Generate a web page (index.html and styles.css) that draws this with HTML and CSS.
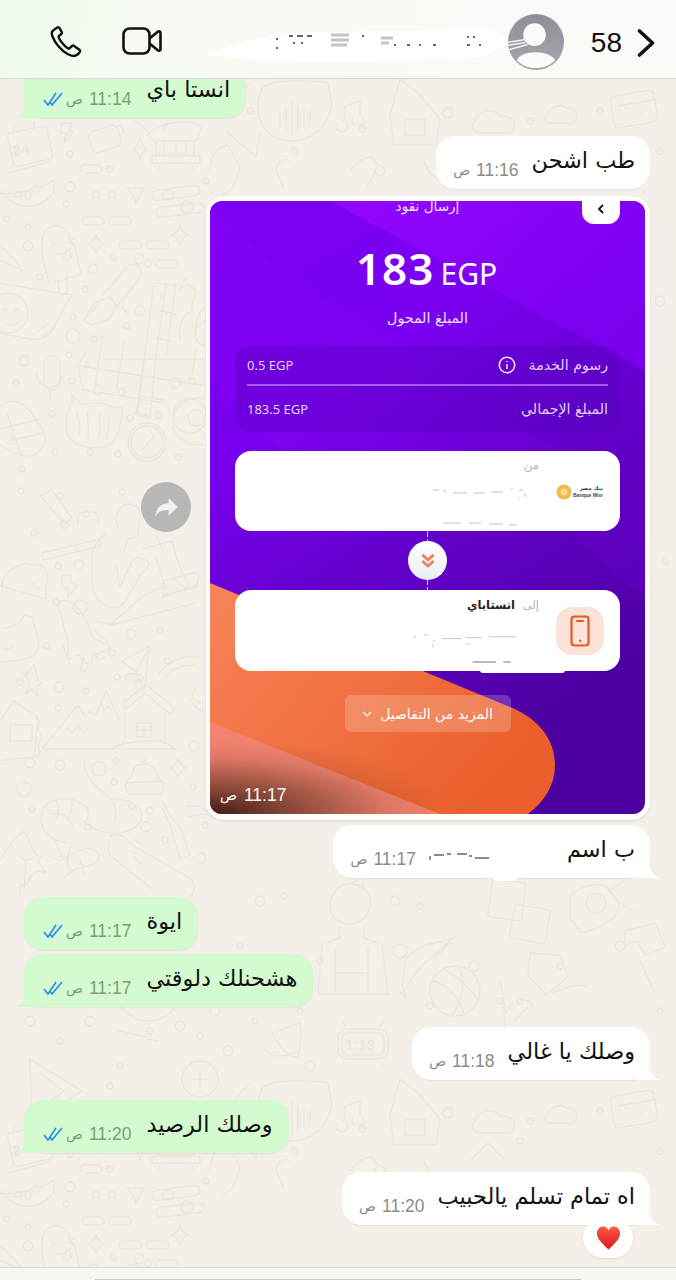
FILE: index.html
```html
<!DOCTYPE html>
<html lang="ar">
<head>
<meta charset="utf-8">
<title>Chat</title>
<link rel="stylesheet" href="styles.css">
</head>
<body>
<div class="phone">
  <header class="topbar">
    <div class="call-actions">
      <svg class="icon-phone" viewBox="0 0 32 32"><path d="M7.2 1.6 3.4 4.2C1.6 5.500 1.500 8 2.400 10.300 4.700 16.400 10.500 24.300 18 28.300c2.700 1.400 5.500 2.200 7.500 1.300 2.100-1 3.900-2.700 4.400-3.900.3-.8.1-1.500-.5-2l-5.300-3.800c-.7-.5-1.500-.4-2.100.1l-2.400 2.200c-.5.4-1.100.5-1.700.2-3.400-1.900-7.600-7.300-9.200-11-.2-.6-.1-1.200.4-1.600l2.200-1.800c.6-.5.8-1.300.4-2L9.600 2.200c-.5-.9-1.500-1.200-2.400-.6Z"/></svg>
      <svg class="icon-video" viewBox="0 0 40 28"><rect x="1.500" y="1.500" width="26" height="25" rx="6"/><path d="M27.500 11.500 35.800 4.800c1.100-.9 2.700-.2 2.700 1.300v15.800c0 1.500-1.600 2.200-2.700 1.300l-8.300-6.700"/></svg>
    </div>
    <div class="contact">
      <svg class="contact-smudge" viewBox="0 0 330 60">
        <path class="smudge-white" d="M4 40C30 30 60 22 80 18L290 14 312 26 280 42C200 48 120 48 60 46Z"/>
        <path class="smudge-dots" d="M76 23v2M76 32v2M88 21h4M96 21h6M106 21h5M92 28h2M100 28h2M162 20v2M193 30h2M206 30h3M218 30h2M232 30h3M266 22h2M272 22h2M266 30h3M278 30h2"/>
        <path class="smudge-light" d="M130 20h18M130 25h18M130 30h16M180 23h12M180 28h8"/>
      </svg>
      <svg class="avatar" viewBox="0 0 58 58">
        <defs><linearGradient id="avatarFill" x1="0" y1="0" x2="0" y2="1"><stop offset="0" stop-color="#8c8e95"/><stop offset="1" stop-color="#a6a9af"/></linearGradient></defs>
        <circle cx="28.500" cy="28.500" r="28.500" fill="url(#avatarFill)"/>
        <circle cx="27" cy="21" r="11.500" fill="#fbfbf9"/>
        <path d="M9 47C11 42 19 39 28 39s17 3 20 8C43 52 36 55 28 55S14 52 9 47Z" fill="#fbfbf9"/>
        <path class="avatar-streak" d="M-1 29 18 26M-1 32 18 29M-1 37 20 31"/>
      </svg>
    </div>
    <div class="back">
      <span class="unread">58</span>
      <svg class="icon-back" viewBox="0 0 18 28"><path d="M2.500 2 15.500 14 2.500 26"/></svg>
    </div>
  </header>

  <main class="chat">
    <svg class="doodles" viewBox="0 78 676 1189">
      <defs>
        <g id="tile">
          <!-- top band -->
          <rect x="10" y="128" width="40" height="34" rx="4" transform="rotate(-12 30 145)"/>
          <path d="M8 172 52 160M14 124v8M34 120v8"/>
          <text class="doodle-label" x="12" y="152" transform="rotate(-12 30 145)">24</text>
          <path d="M62 122h10l-4 8h6l-10 12 2-10h-6Z"/>
          <rect x="90" y="127" width="30" height="22" rx="5" transform="rotate(-18 105 138)"/>
          <path d="M115 127l6-3 3 8-6 3"/>
          <path d="M148 134c8-12 42-18 54-8l-6 14h-42ZM156 140h38v14h-38ZM152 155h48v7h-48ZM164 140v14M176 140v14M186 140v14M160 162l-2 8M192 162l2 8"/>
          <path d="M134 120c6 2 10 6 14 12M170 122c-4 2-6 4-8 8"/>
          <path d="M133 148c4-2 6-6 7-11 1 5 3 9 7 11-4 2-6 6-7 11-1-5-3-9-7-11Z"/>
          <rect x="80" y="164" width="22" height="8" rx="4"/>
          <path d="M2 189c10 20 36 22 50 4 3-4 3-9 2-14"/>
          <path d="M-4 192c14 2 44-2 58-13"/>
          <ellipse cx="18" cy="193" rx="4" ry="3"/><ellipse cx="28" cy="194" rx="3" ry="4"/><ellipse cx="36" cy="188" rx="4" ry="3"/>
          <path d="M126 187h17l-7 16-2-8Z"/>
          <rect x="152" y="187" width="48" height="10" rx="5" transform="rotate(-7 176 192)"/>
          <circle cx="168" cy="194" r="5"/>
          <rect x="156" y="204" width="48" height="10" rx="5" transform="rotate(-7 180 209)"/>
          <circle cx="187" cy="206" r="6"/>
          <path d="M42 243c0-10 4-18 14-18 5 0 8 1 10 5l3 3-1 3 3 3-1 3 5 3 6 28-32 10-7-30Z"/>
          <path d="M58 276l1 14c1 5 8 4 8 0v-16M50 240l6 3-6 2M75 237l-6 4 6 2M55 252c3 2 12 0 15-4l1 8c-2 4-6 4-8 0"/>
          <rect x="82" y="216" width="22" height="8" rx="4"/><rect x="109" y="216" width="22" height="8" rx="4"/>
          <rect x="119" y="240" width="23" height="8" rx="4"/><rect x="146" y="240" width="23" height="8" rx="4"/>
          <rect x="156" y="259" width="22" height="8" rx="4"/>
          <path d="M88 243c5-2 7-5 8-10 1 5 3 8 8 10-5 2-7 5-8 10-1-5-3-8-8-10Z"/>
          <path d="M172 234c5-2 7-5 8-10 1 5 3 8 8 10-5 2-7 5-8 10-1-5-3-8-8-10Z"/>
          <path d="M-2 282 72 294c-6 10-12 18-18 32-4 10-14 14-24 12L-2 332"/>
          <circle cx="8" cy="312" r="20"/>
          <path d="M2 310c2-3 4-3 6 0M14 310c2-3 4-3 6 0M4 320c4 6 12 6 18-2M36 332l12-10M42 336l10-8"/>
          <path d="M0 245c8 6 16 14 22 24-8-2-16-8-22-10"/>
          <path d="M84 320l10-18 16-6 6 8-6 14-18 6ZM103 294l24-28c5-5 13-2 14 4 1 4-1 7-3 10l-22 26"/>
          <path d="M92 311l8-9M122 305c3 3 3 8 6 8"/>
          <path d="M104 358h100M80 365l126 20M86 350 78 365l5 24 82 13M103 334l-5 30-3 24M124 340l-4 26-4 24M146 344l-8 68M166 283l-10 72-6 62-14-3 10-70 8-62ZM160 310l16 3M156 337l16 3M176 282l-10 73M165 283l12 2M196 348l-4 26M138 395l26 4M134 412l16 3"/>
          <text class="doodle-label small" x="84" y="366">a</text><text class="doodle-label small" x="160" y="298">t</text>
          <rect x="44" y="355" width="16" height="34" rx="8"/>
          <path d="M37 372c0 18 24 20 25 2M50 390v8"/>
          <path d="M0 405c10-8 22-6 32 8 6 10 12 14 13 22 1 10-6 18-14 20-8 2-24-6-32-12M6 410l16 46M0 428l40-10M8 440l36-8M10 432l6 8"/>
          <path d="M72 394l10 10c12-4 24-2 34 3l6-1 0 6c-2 10-2 24-12 32-10 4-28 4-38-4-8-8-8-24 0-38Z"/>
          <path d="M76 410c2 6 6 14 2 26M88 410c-2 8 2 14 0 28M100 412c-2 8 2 14-2 26M110 414c-2 8 0 14-4 24"/>
          <circle cx="147" cy="441" r="19"/><circle cx="147" cy="441" r="16"/>
          <path d="M141 450 155 434M150 430l2 2"/>
          <circle cx="190" cy="415" r="17"/><path d="M205 398c-18-4-32 8-32 24 0 12 10 22 30 22"/>
          <circle cx="196" cy="417" r="8"/>
          <path d="M178 290c5-8 12-8 18 0 0 5-2 8-4 12v8c-10 4-14 14-12 30M182 282l5-6M210 304c-8 2-16 14-14 30"/>
          <circle cx="207" cy="333" r="12"/>
          <!-- mid-left -->
          <path d="M40 495l12-6 20 28-7 6ZM60 523l5-4 4 5-5 4Z"/>
          <path d="M78 525v-8c0-4 2-6 6-6h8c4 0 6 2 6 6v6"/><path d="M42 552 100 538l1 7-58 14ZM75 549l4 1"/>
          <path d="M2 590c-2-12 6-22 18-26l6-2 8 2 8 0 4 6 2 6-2 10 0 12-48-14"/>
          <circle cx="34" cy="582" r="1"/><circle cx="38" cy="588" r="1"/>
          <path d="M62 574h8l2 8 6 2-10 12v-8l-6-2Z"/>
          <path d="M118 527c-5-10 0-22 10-24 10 0 14 8 12 14l-2 16c-2 4-6 6-10 4l-4 14M106 532c-8 6-14 16-14 26v24c0 8 4 16 10 20 8 6 16 6 22 0l18-30c6-4 8-8 6-12l-10-4-6 4-12 26-4-24M142 548l30-8c4 14 6 26 16 42l-2 6-14-12M162 586l-18 8-34 30M164 552l-8-18M156 556l10 32"/>
          <path d="M110 624 196 602M163 580l30-8c3 0 6-1 6 4l-2 8-34 12ZM163 594l35-8"/>
          <path d="M2 628c10-2 18-4 22-14l8 2 6 20c2 10 0 16-6 20-8 2-20 6-34 4M2 648c6 2 10-2 12-4"/>
          <path d="M62 614c-6-6-4-18 6-14 10 4 20 18 24 36l16 8c4 2 2 4-2 6l-14 4c2 10-2 10-6 8l-8-8-8 4c-4-2 0-14-4-24-2-8-4-14-4-20ZM94 650l4 10 8-4M84 656l-4 14 6 0"/>
          <path d="M94 628l14 14M70 664l-8-22M96 620l14 3"/>
          <path d="M122 660l28-15c-4 12-2 26-6 44l-8-18ZM136 671l14-26"/>
          <path d="M34 664l4 16 4 2-6 4 2 10-6-8-6 4 4-10-8-12 4 4Z"/>
          <path d="M0 720 14 700l24 16-4 40L-2 760M10 724h22v16H10ZM36 716l4 4-2 8 4 8-4 8 2 8-4 4"/>
          <path d="M42 748 78 704l8 12 4-6 6 4 10-24 14 30M42 748H176M66 726l6 6 6-8 6 10 4-8M100 700l4 10 4-6 4 8"/>
          <path d="M125 700l18-14c2-2 4-2 6 0l24 20c4 4-1 9-4 6l-24-20-16 14c-4 3-8-2-4-6ZM125 712v26M165 708v30M135 689v-10h-8c-4-2 0-6 4-6h6c6 0 8 4 4 6h-4v4"/>
          <rect x="137" y="722" width="14" height="14"/><path d="M144 722v14M137 729h14M112 748c6-6 30-8 38-8h12M150 740c10 0 20 2 24 8"/>
          <path d="M158 674c10-14 24-20 42-18M162 680c8-12 18-16 34-16M198 686c-6 4-8 10-2 14 4 2 6 2 8 2M190 696c2 8 8 14 14 14"/>
          <path d="M132 775c-8 4-8 14-2 18l30 0c6-4 4-12-2-16-2-10-6-14-14-14-8 0-12 4-12 12ZM127 782l36-2M143 765l-2-4 4-1-1-3"/>
          <path d="M170 767c5-2 7-5 8-10 1 5 3 8 8 10-5 2-7 5-8 10-1-5-3-8-8-10Z"/>
          <path d="M72 842c-12 0-26-4-30-18-4-14 4-26 22-26 16 0 30 8 22 22M56 800c4 6 2 14 0 20M72 800c0 6 0 12-4 18M50 812l14 2 6 6 4 8M84 820c8 8 16 12 30 12 20 0 28-10 28-18 0-10-14-16-32-16M55 840l8 18-2 2-10-4M72 842l-6 18"/>
          <path d="M84 758c0 14 8 26 20 34 12 8 14 18 10 30"/>
          <circle cx="99" cy="768" r="7"/>
          <path d="M0 860l14-22 10-8 12 24 6 2-4 4 8 12-8-2-6 4-6 10H20v12M26 860l-2 28M20 855c2 4 8 6 12 2"/>
          <path d="M110 834c10-2 16 2 22 10l56 32c8 6 8 14 2 20M112 834c-4 8-6 16 0 22l40 32M134 838l8 6M130 850l10 4M134 856l8 8"/>
          <path d="M68 856c8-8 24-12 30-4 4 8-4 12-14 14-6 2-14 6-16-2ZM78 866 64 876M80 858l4 16"/>
          <path d="M162 800c6 10 10 20 18 26l10 28-10 4-8-28-10-24M186 806c8-2 18-2 22 8-6-2-12 0-20 2"/>
          <!-- lower mid -->
          <path d="M330 905c0-12 8-22 20-22 14 0 22 10 20 22-2 10-8 18-20 18-12 0-20-8-20-18ZM340 925c-2 4-2 8 0 12l-18 6-4 50h70l-6-50-18-6v-12M335 948v44M368 948v44M335 972h33"/>
          <path d="M350 883l6-3 4-6 4 4-2 6-5 4"/>
          <g transform="translate(0 -32)"><circle cx="455" cy="1022" r="25"/><path d="M432 1012c12 2 28 14 32 34M444 1000c14 8 28 22 34 30M458 998c8 10 6 34-6 48"/></g>
          <path transform="translate(0 -30)" d="M404 1020c8-14 16-26 28-34l20-18-18 4c-12 2-22 8-28 16l-4 26 4 12-6-4ZM452 966c-4 10-12 16-18 22"/>
          <rect x="490" y="880" width="34" height="38" rx="3" transform="rotate(8 507 899)"/><rect x="512" y="906" width="36" height="34" rx="3" transform="rotate(10 530 923)"/>
          <path d="M570 895c8-8 22-14 36-10l14 18-6 14c-10 6-24 16-34 14l-10-14Z"/><circle cx="596" cy="902" r="10"/>
          <path d="M608 890l16-10M622 905l16 6"/>
          <path transform="translate(0 -18)" d="M530 970l30 2 8 22-22 18-18-20ZM552 1010c14-6 30-10 36-6"/>
          <path transform="translate(0 -30)" d="M500 1008l6 34 6-10M504 1036l2 40M520 1028c6 0 10 2 14 8M514 1050l14-14"/>
          <path transform="translate(0 -30)" d="M625 960l30-8 10 24-20 8-8-14-12 4ZM640 990l14 30"/>
          <path d="M120 1006l18-16 32-8 10 10-8 18c-10 10-24 12-36 8ZM118 1030l28 6M148 1038l10 2"/>
          <rect x="338" y="1028" width="50" height="30" rx="9"/><rect x="342" y="1032" width="42" height="22" rx="6"/>
          <path d="M344 1060v5M382 1060v5M346 1026l-4-6M380 1026l4-6"/>
          <text class="doodle-label" x="345" y="1049">1:13</text>
          <path d="M272 1032l28-10c2 14 0 26-2 34-6 2-18-8-26-24ZM298 1050c-10 6-26 8-34-2"/>
          <path d="M30 1058 82 1090 32 1122ZM40 1072l24 18-24 18"/>
          <path d="M200 1060a18 18 0 1 1 0 36a18 18 0 0 1 0-36ZM192 1078h16M200 1070v16"/>
          <!-- top middle -->
          <path d="M262 86c10-6 40-8 66-4l4 22c-4 22-20 36-42 36-20 0-34-16-32-40ZM280 110v16M286 106v24M292 100v36M298 104v26M304 108v20M310 110v16"/>
          <path d="M230 105l20-24M226 130l30 26 4-26"/>
          <path d="M345 120v-15l15-5v15M338 122a6 5 0 1 0 8 0M354 116a6 5 0 1 0 8 0"/>
          <path d="M400 78l18 14 22 26-4 26h-42l-4-30ZM405 118h20v16h-20Z"/>
          <path d="M475 120c4-12 18-14 26-4 12-4 18 10 10 16h-32c-8-2-8-10-4-12Z"/>
          <rect x="612" y="92" width="44" height="32" rx="4" transform="rotate(-10 634 108)"/><path d="M618 105l36-6M628 114h2M634 113h2M640 112h2"/>
          <path d="M548 112c4-8 14-10 20-4 8-2 12 8 6 14h-26c-4-2-4-8 0-10Z"/>
          <path d="M210 170c0-14 6-24 18-26l12 22-6 18c-4 6-8 10-12 10M350 170c6-8 14-14 22-14l6 8-12 24M290 160c-6-4-12 0-14 8l8 20"/>
          <path d="M470 160l18-18 16 16M424 160c2 8 6 14 14 18"/>
          <!-- scattered dots -->
          <g class="dots">
            <circle cx="70" cy="153" r="3"/><circle cx="110" cy="168" r="3"/><circle cx="70" cy="186" r="5"/><circle cx="96" cy="193" r="3.500"/><circle cx="112" cy="193" r="3.500"/><circle cx="66" cy="203" r="3"/><circle cx="7" cy="218" r="3"/><circle cx="28" cy="226" r="3"/><circle cx="28" cy="245" r="5"/><circle cx="40" cy="276" r="3"/><circle cx="139" cy="258" r="5"/><circle cx="113" cy="256" r="3"/><circle cx="93" cy="268" r="5"/><circle cx="148" cy="262" r="3.500"/><circle cx="85" cy="288" r="3"/><circle cx="140" cy="310" r="5"/><circle cx="73" cy="316" r="3"/><circle cx="127" cy="325" r="3"/><circle cx="73" cy="335" r="7"/><circle cx="94" cy="338" r="3"/><circle cx="69" cy="354" r="3"/><circle cx="24" cy="360" r="5"/><circle cx="16" cy="382" r="3"/><circle cx="72" cy="380" r="3"/><circle cx="98" cy="389" r="5"/><circle cx="122" cy="391" r="3.500"/><circle cx="52" cy="413" r="3"/><circle cx="130" cy="417" r="3"/><circle cx="175" cy="382" r="5"/><circle cx="192" cy="380" r="3"/><circle cx="159" cy="414" r="3"/><circle cx="55" cy="451" r="3"/><circle cx="90" cy="451" r="3"/><circle cx="118" cy="453" r="3"/><circle cx="178" cy="456" r="3"/><circle cx="22" cy="468" r="3"/><circle cx="60" cy="495" r="3"/><circle cx="34" cy="532" r="3"/><circle cx="86" cy="513" r="3"/><circle cx="122" cy="491" r="3"/><circle cx="21" cy="490" r="3"/><circle cx="58" cy="565" r="3"/><circle cx="79" cy="564" r="5"/><circle cx="56" cy="601" r="3"/><circle cx="80" cy="606" r="7"/><circle cx="47" cy="645" r="3"/><circle cx="131" cy="633" r="5"/><circle cx="160" cy="629" r="3"/><circle cx="112" cy="652" r="3"/><circle cx="167" cy="660" r="3"/><circle cx="117" cy="676" r="3"/><circle cx="86" cy="690" r="3"/><circle cx="59" cy="686" r="5"/><circle cx="20" cy="681" r="3"/><circle cx="58" cy="707" r="3"/><circle cx="194" cy="745" r="5"/><circle cx="30" cy="762" r="5"/><circle cx="60" cy="764" r="5"/><circle cx="116" cy="760" r="3"/><circle cx="114" cy="781" r="3"/><circle cx="193" cy="786" r="3"/><circle cx="24" cy="788" r="7"/><circle cx="32" cy="808" r="3"/><circle cx="132" cy="805" r="3"/><circle cx="150" cy="810" r="3.500"/><circle cx="146" cy="826" r="5"/><circle cx="88" cy="826" r="3"/><circle cx="165" cy="839" r="3"/><circle cx="205" cy="824" r="3"/><circle cx="201" cy="857" r="5"/>
            <circle cx="250" cy="110" r="3"/><circle cx="362" cy="128" r="3"/><circle cx="448" cy="112" r="5"/><circle cx="530" cy="120" r="3"/><circle cx="600" cy="110" r="3"/><circle cx="520" cy="140" r="3"/><circle cx="295" cy="150" r="3"/><circle cx="380" cy="170" r="5"/><circle cx="206" cy="180" r="3"/><circle cx="660" cy="150" r="3"/><circle cx="665" cy="560" r="3"/><circle cx="660" cy="300" r="5"/>
            <circle cx="260" cy="900" r="5"/><circle cx="284" cy="895" r="3"/><circle cx="320" cy="960" r="3"/><circle cx="240" cy="945" r="3"/><circle cx="395" cy="900" r="5"/><circle cx="400" cy="950" r="7"/><circle cx="420" cy="905" r="3"/><circle cx="474" cy="965" r="5"/><circle cx="430" cy="1005" r="3"/><circle cx="215" cy="1010" r="5"/><circle cx="255" cy="1020" r="3"/><circle cx="300" cy="1010" r="3"/><circle cx="310" cy="1065" r="5"/><circle cx="228" cy="1050" r="5"/><circle cx="200" cy="1035" r="3"/><circle cx="180" cy="1025" r="5"/><circle cx="500" cy="1000" r="3"/><circle cx="520" cy="1000" r="3"/><circle cx="560" cy="965" r="3"/><circle cx="620" cy="945" r="5"/><circle cx="660" cy="1010" r="3"/><circle cx="640" cy="1060" r="3"/>
            <circle cx="30" cy="1020" r="5"/><circle cx="120" cy="1065" r="3"/><circle cx="150" cy="1030" r="3"/><circle cx="90" cy="1020" r="5"/><circle cx="60" cy="1040" r="3"/><circle cx="110" cy="1085" r="3"/>
          </g>
        </g>
      </defs>
      <use href="#tile"/>
      <use href="#tile" y="1000"/>
    </svg>

    <div class="row row-in first">
      <div class="bubble in tailed">
        <p class="text">انستا باي</p>
        <div class="meta"><span class="time">11:14</span><span class="am">ص</span><svg class="ticks" viewBox="0 0 20 14"><path d="M1 8l4 5L13 1M7 10l2 3L19 1"/></svg></div>
      </div>
    </div>

    <div class="row row-out gap-18">
      <div class="bubble out">
        <p class="text">طب اشحن</p>
        <div class="meta"><span class="time">11:16</span><span class="am">ص</span></div>
      </div>
    </div>

    <div class="row row-out row-card gap-7">
      <button class="forward"><svg viewBox="0 0 24 20"><path d="M14 1v5C6 6.500 2 11 1 19c3-5 7-6.500 13-6.500V18l9-8.500Z"/></svg></button>
      <div class="card-bubble">
        <div class="card">
          <svg class="card-art" viewBox="0 0 435 613" preserveAspectRatio="none">
            <defs>
              <linearGradient id="base" x1="0" y1="0" x2="0.45" y2="1"><stop offset="0" stop-color="#7c00f4"/><stop offset="0.35" stop-color="#7a00f0"/><stop offset="0.6" stop-color="#6600d0"/><stop offset="1" stop-color="#4c00a0"/></linearGradient>
              <linearGradient id="band" x1="0" y1="0" x2="1" y2="0.6"><stop offset="0" stop-color="#9406ff"/><stop offset="1" stop-color="#7a00ee"/></linearGradient>
              <linearGradient id="band2" x1="0" y1="0" x2="1" y2="0"><stop offset="0" stop-color="#8e06f4"/><stop offset="1" stop-color="#6c00da"/></linearGradient>
              <linearGradient id="orange" x1="0" y1="0" x2="1" y2="0.6"><stop offset="0" stop-color="#f8845a"/><stop offset="1" stop-color="#ea5f2b"/></linearGradient>
              <radialGradient id="shade" cx="0" cy="1" r="1"><stop offset="0" stop-color="#33150c" stop-opacity=".95"/><stop offset=".4" stop-color="#4a2418" stop-opacity=".55"/><stop offset=".75" stop-color="#4a2418" stop-opacity=".12"/><stop offset="1" stop-color="#4a2418" stop-opacity="0"/></radialGradient>
            </defs>
            <rect width="435" height="613" fill="url(#base)"/>
            <path d="M120 0H435V170Z" fill="url(#band)"/>
            <path d="M0 180 120 300H330L435 400V300L230 180 60 60 0 0Z" fill="url(#band2)" opacity=".25"/>
            <path d="M0 382 300 506c30 12 45 34 45 58 0 20-10 36-27 49H0Z" fill="url(#orange)"/>
            <path d="M0 521 230 613H0Z" fill="#f2836f"/>
            <rect x="0" y="538" width="240" height="75" fill="url(#shade)"/>
          </svg>
          <div class="card-title">إرسال نقود</div>
          <div class="card-back"><svg viewBox="0 0 8 10"><path d="M6 1 2 5l4 4"/></svg></div>
          <div class="amount" dir="ltr"><span class="amount-num">183</span> <span class="amount-cur">EGP</span></div>
          <div class="amount-label">المبلغ المحول</div>
          <section class="fees">
            <div class="fee-row fee-first">
              <span class="fee-name">رسوم الخدمة</span>
              <svg class="info" viewBox="0 0 18 18"><circle cx="9" cy="9" r="7.700"/><path d="M9 8v5M9 5v1"/></svg>
              <span class="fee-val">0.5 EGP</span>
            </div>
            <div class="fee-rule"></div>
            <div class="fee-row fee-total">
              <span class="fee-name">المبلغ الإجمالي</span>
              <span class="fee-val">183.5 EGP</span>
            </div>
          </section>
          <section class="party party-from-card">
            <div class="party-logo">
              <svg class="banque" viewBox="0 0 48 24"><circle cx="8" cy="12" r="7.500" fill="#eebd4c"/><circle cx="8" cy="12" r="3.500" fill="#f9dc8c"/><text class="banque-ar" x="47" y="10">بنك مصر</text><text class="banque-en" x="47" y="17">Banque Misr</text></svg>
            </div>
            <div class="party-info">
              <span class="party-from">من</span>
              <svg class="redact" viewBox="0 0 110 50"><path d="M4 9h6M14 10h3M24 12h14M44 12h12M62 11h12M82 8h2M90 9h4M96 12v4M90 18h1M14 42h18M40 42h12M60 43h14M80 44h8"/></svg>
            </div>
          </section>
          <div class="link">
            <span class="link-btn"><svg viewBox="0 0 16 16"><path d="M3 2.500 8 7l5-4.500M3 8l5 4.500L13 8"/></svg></span>
          </div>
          <section class="party party-to">
            <div class="party-logo tile"><svg class="phone-icon" viewBox="0 0 20 32"><rect x="1.500" y="1.500" width="17" height="29" rx="3"/><path d="M7 6h6M10 25.500v.5"/></svg></div>
            <div class="party-info">
              <span class="party-from"><span>إلى</span> <b>انستاباي</b></span>
              <svg class="redact" viewBox="0 0 140 50"><path d="M8 12h3M20 10h5M30 16h2M40 14h22M66 13h18M92 12h30M30 20v4M66 20h6"/><path class="redact-dark" d="M74 40h26M108 40h8"/></svg>
            </div>
          </section>
          <div class="more"><span class="more-btn"><span>المزيد من التفاصيل</span><svg viewBox="0 0 10 6"><path d="M1 1l4 4 4-4"/></svg></span></div>
          <div class="card-time"><span>11:17</span> <span class="am">ص</span></div>
        </div>
      </div>
    </div>

    <div class="row row-out gap-5">
      <div class="bubble out tailed w-name">
        <p class="text">ب اسم</p>
        <svg class="name-redact" viewBox="0 0 70 20"><path d="M3 10v4M7 9h10M20 8h4M30 8h10M42 10h3M48 12h14"/></svg>
        <div class="meta"><span class="time">11:17</span><span class="am">ص</span></div>
      </div>
    </div>

    <div class="row row-in gap-19">
      <div class="bubble in">
        <p class="text">ايوة</p>
        <div class="meta"><span class="time">11:17</span><span class="am">ص</span><svg class="ticks" viewBox="0 0 20 14"><path d="M1 8l4 5L13 1M7 10l2 3L19 1"/></svg></div>
      </div>
    </div>

    <div class="row row-in gap-4">
      <div class="bubble in tailed">
        <p class="text">هشحنلك دلوقتي</p>
        <div class="meta"><span class="time">11:17</span><span class="am">ص</span><svg class="ticks" viewBox="0 0 20 14"><path d="M1 8l4 5L13 1M7 10l2 3L19 1"/></svg></div>
      </div>
    </div>

    <div class="row row-out gap-20">
      <div class="bubble out tailed">
        <p class="text">وصلك يا غالي</p>
        <div class="meta"><span class="time">11:18</span><span class="am">ص</span></div>
      </div>
    </div>

    <div class="row row-in gap-20">
      <div class="bubble in tailed">
        <p class="text">وصلك الرصيد</p>
        <div class="meta"><span class="time">11:20</span><span class="am">ص</span><svg class="ticks" viewBox="0 0 20 14"><path d="M1 8l4 5L13 1M7 10l2 3L19 1"/></svg></div>
      </div>
    </div>

    <div class="row row-out gap-19">
      <div class="bubble out tailed">
        <p class="text">اه تمام تسلم يالحبيب</p>
        <div class="meta"><span class="time">11:20</span><span class="am">ص</span></div>
        <div class="reaction"><svg viewBox="0 0 26 26"><defs><linearGradient id="heart" x1="0" y1="0" x2="0" y2="1"><stop offset="0" stop-color="#ff5a45"/><stop offset="1" stop-color="#d9171c"/></linearGradient></defs><path d="M13 25C6 18 1 14 1 8c0-4 3-7 6.500-7C10 1 12 2.500 13 5c1-2.500 3-4 5.500-4C22 1 25 4 25 8c0 6-5 10-12 17Z" fill="url(#heart)"/></svg></div>
      </div>
    </div>
  </main>

  <footer class="composer"><div class="composer-line"></div></footer>
</div>
</body>
</html>
```

FILE: styles.css
```css
* { box-sizing: border-box; }
html, body { margin: 0; padding: 0; }
body { width: 676px; height: 1280px; overflow: hidden; background: #f4f0e9; font-family: "Liberation Sans", Arial, sans-serif; }
.phone { width: 676px; height: 1280px; display: flex; flex-direction: column; }

/* header */
.topbar { height: 79px; flex: none; display: flex; align-items: center; padding: 0 21px 0 50px; background: linear-gradient(100deg, #effbee 0%, #fafaf5 35%, #fbfaf7 100%); border-bottom: 1px solid #d9d8d3; position: relative; z-index: 3; }
.call-actions { display: flex; align-items: center; gap: 40px; }
.icon-phone { width: 32px; height: 32px; fill: none; stroke: #111; stroke-width: 2.400; margin-top: 5px; }
.icon-video { width: 40px; height: 28px; fill: none; stroke: #111; stroke-width: 2.600; stroke-linejoin: round; margin-top: 4px; }
.contact { flex: 1; display: flex; justify-content: flex-end; align-items: center; position: relative; padding-right: 26px; }
.contact-smudge { position: absolute; right: 60px; top: 7px; width: 330px; height: 60px; filter: blur(.5px); }
.smudge-white { fill: #ffffff; }
.smudge-dots { fill: none; stroke: #666; stroke-width: 2; }
.smudge-light { fill: none; stroke: #c4c4c2; stroke-width: 3; }
.avatar { width: 57px; height: 57px; display: block; margin-top: 6px; position: relative; overflow: visible; }
.avatar-streak { fill: none; stroke: #f4f4f2; stroke-width: 1.500; }
.back { display: flex; align-items: center; gap: 15px; margin-top: 7px; }
.unread { font-size: 28px; color: #111; line-height: 1; }
.icon-back { width: 18px; height: 28px; fill: none; stroke: #111; stroke-width: 3.600; stroke-linecap: round; stroke-linejoin: round; }

/* chat */
.chat { flex: 1; position: relative; overflow: hidden; background: #f4f0e9; display: flex; flex-direction: column; }
.doodles { position: absolute; inset: 0; width: 676px; height: 1189px; fill: none; stroke: #ebe5db; stroke-width: 1.300; }
.doodle-label { font-family: "Liberation Sans", sans-serif; font-size: 15px; font-weight: 700; fill: #ece6dc; stroke: none; }
.doodle-label.small { font-size: 11px; font-weight: 400; }
.row { display: flex; position: relative; flex: none; }
.row-in { justify-content: flex-start; padding-left: 24px; }
.row-out { justify-content: flex-end; padding-right: 26px; }
.first { margin-top: -14px; }
.gap-4 { margin-top: 4px; }
.gap-5 { margin-top: 5px; }
.gap-7 { margin-top: 7px; }
.gap-18 { margin-top: 18px; }
.gap-19 { margin-top: 19px; }
.gap-20 { margin-top: 20px; }

.bubble { display: flex; flex-direction: row-reverse; align-items: flex-start; height: 53px; border-radius: 19px; padding: 8px 15px 0 17px; position: relative; box-shadow: 0 1px 1px rgba(90, 80, 60, .08); }
.bubble.in { background: #d3fbcf; padding-right: 16px; padding-left: 19px; }
.bubble.out { background: #fff; }
.tailed.in::after { content: ""; position: absolute; left: -9px; bottom: 0; width: 24px; height: 16px; background: #d3fbcf; clip-path: path("M0 16C6 14 9 10 10 0H24V16Z"); }
.tailed.out::after { content: ""; position: absolute; right: -11px; bottom: 0; width: 26px; height: 16px; background: #fff; clip-path: path("M26 16C19 15 15 10 14 0H0V16Z"); }
.text { margin: 0; direction: rtl; font-family: "DejaVu Sans", sans-serif; font-size: 22.400px; line-height: 32px; color: #111; white-space: nowrap; position: relative; z-index: 1; }
.meta { display: flex; flex-direction: row-reverse; align-items: center; gap: 6px; margin: 16px 13px 0 0; color: #8b8b88; line-height: 20px; position: relative; z-index: 1; }
.bubble.in .meta { color: #7e9a7c; margin-right: 15px; }
.time { font-size: 17.500px; }
.am { font-family: "DejaVu Sans", sans-serif; font-size: 14px; }
.ticks { width: 20px; height: 14px; fill: none; stroke: #2b8ff0; stroke-width: 1.700; margin-right: -3px; }

/* forwarded card */
.row-card { align-items: center; gap: 15px; }
.forward { width: 50px; height: 50px; padding: 0; margin-bottom: 2px; border: 0; border-radius: 50%; background: #b7b7b5; display: flex; align-items: center; justify-content: center; }
.forward svg { width: 25px; height: 21px; fill: #f1f1ef; }
.card-bubble { background: #fff; border-radius: 18px; padding: 5px 5px 6px 4px; box-shadow: 0 1px 2px rgba(90, 80, 60, .18); }
.card { width: 435px; height: 613px; border-radius: 12px; overflow: hidden; position: relative; display: flex; flex-direction: column; align-items: center; color: #fff; font-family: "Noto Sans", "DejaVu Sans", sans-serif; }
.card-art { position: absolute; inset: 0; width: 100%; height: 100%; }
.card > *:not(.card-art) { position: relative; }
.card-title { font-family: "DejaVu Sans", sans-serif; font-size: 13.600px; line-height: 16px; margin-top: -3px; direction: rtl; color: #f2e6ff; }
.card-back { position: absolute !important; top: 0; right: 25px; width: 38px; height: 23px; background: #fff; border-radius: 0 0 12px 12px; display: flex; align-items: center; justify-content: center; }
.card-back svg { width: 8px; height: 10px; fill: none; stroke: #111; stroke-width: 1.800; transform: translateY(-4px); }
.amount { margin-top: 26px; margin-right: 2px; height: 56px; line-height: 56px; white-space: nowrap; font-weight: 500; }
.amount-num { font-size: 44px; font-weight: 600; letter-spacing: 1px; }
.amount-cur { font-size: 30px; font-weight: 400; margin-left: 2px; }
.amount-label { font-family: "DejaVu Sans", sans-serif; font-size: 14.200px; line-height: 18px; margin-top: 13px; direction: rtl; color: #efe0ff; }
.fees { width: 385px; height: 86px; margin-top: 19px; background: rgba(70, 0, 170, .26); border-radius: 14px; padding: 0 12px; display: flex; flex-direction: column; }
.fee-row { display: flex; flex-direction: row; align-items: center; direction: rtl; font-size: 13px; color: #e4d2ff; }
.fee-first { height: 38px; }
.fee-total { height: 46px; }
.fee-rule { height: 2px; background: rgba(190, 130, 255, .7); flex: none; }
.fee-name { font-family: "DejaVu Sans", sans-serif; font-size: 14.200px; }
.info { width: 18px; height: 18px; margin-right: 13px; fill: none; stroke: #f1e5ff; stroke-width: 1.500; }
.fee-val { margin-right: auto; direction: ltr; }
.party { width: 385px; height: 80px; background: #fff; border-radius: 16px; display: flex; flex-direction: row-reverse; align-items: center; padding-right: 16px; color: #222; }
.party-from-card { margin-top: 19px; }
.party-to { height: 81px; }
.party-to::after { content: ""; position: absolute; left: 245px; bottom: -2px; width: 85px; height: 3px; background: #fff; border-radius: 0 0 3px 3px; }
.party-logo { width: 48px; height: 48px; display: flex; align-items: center; justify-content: center; margin-top: 1px; }
.party-logo.tile { background: #fbe3da; border-radius: 16px; }
.banque { width: 48px; height: 24px; }
.banque-ar { font-family: "DejaVu Sans", sans-serif; font-size: 5.500px; font-weight: 700; fill: #444; text-anchor: start; direction: rtl; }
.banque-en { font-family: "Liberation Sans", sans-serif; font-size: 5px; font-weight: 700; fill: #444; text-anchor: end; }
.phone-icon { width: 20px; height: 32px; fill: none; stroke: #e65a22; stroke-width: 2.200; stroke-linecap: round; }
.party-info { flex: 1; height: 80px; padding: 7px 17px 0 0; display: flex; flex-direction: column; align-items: flex-end; gap: 0; }
.party-from { font-family: "DejaVu Sans", sans-serif; font-size: 11.500px; line-height: 15px; color: #b4b4b4; direction: rtl; }
.party-from b { color: #222; font-weight: 700; margin-right: 4px; }
.redact { width: 110px; height: 50px; fill: none; stroke: #c2c2c2; stroke-width: 1; margin-top: 8px; filter: blur(.4px); }
.party-to .redact { width: 140px; margin-top: 13px; }
.redact-dark { stroke: #777; stroke-width: 1.200; }
.link { height: 59px; width: 1px; flex: none; background: repeating-linear-gradient(to bottom, #d4c5f0 0 6px, transparent 6px 8px); display: flex; align-items: center; justify-content: center; }
.link-btn { flex: none; width: 39px; height: 39px; border-radius: 50%; background: linear-gradient(#ffffff, #e8eef2); display: flex; align-items: center; justify-content: center; }
.link-btn svg { width: 18px; height: 18px; fill: none; stroke: #e9875c; stroke-width: 2.600; }
.more { margin-top: 24px; }
.more-btn { width: 166px; height: 37px; background: rgba(255, 255, 255, .2); border-radius: 6px; display: flex; flex-direction: row; align-items: center; justify-content: center; gap: 8px; direction: rtl; font-family: "DejaVu Sans", sans-serif; font-size: 14px; color: #fff; white-space: nowrap; }
.more-btn svg { width: 10px; height: 6px; fill: none; stroke: #fff; stroke-width: 1.200; }
.card-time { position: absolute !important; left: 10px; bottom: 9px; display: flex; flex-direction: row-reverse; gap: 7px; align-items: center; color: #fff; font-family: "Liberation Sans", sans-serif; font-size: 17.500px; line-height: 20px; }
.card-time .am { font-size: 14px; }

.name-redact { width: 70px; height: 20px; margin: 13px 70px 0 0; fill: none; stroke: #666; stroke-width: 1.400; }
.w-name .meta { margin-right: 11px; }
.w-name::before { content: ""; position: absolute; left: 160px; bottom: -3px; width: 24px; height: 4px; background: #fff; border-radius: 0 0 4px 4px; }
.reaction { position: absolute; right: 17px; top: 46px; width: 50px; height: 40px; border-radius: 22px; background: #fff; display: flex; align-items: center; justify-content: center; box-shadow: 0 1px 2px rgba(90, 80, 60, .12); z-index: 2; }
.reaction svg { width: 25px; height: 26px; }

.composer { height: 13px; flex: none; background: #f5f5f4; border-top: 1px solid #d8d8d6; padding: 11px 95px 0; position: relative; z-index: 3; }
.composer-line { height: 1px; background: #c9c9c7; }
```
